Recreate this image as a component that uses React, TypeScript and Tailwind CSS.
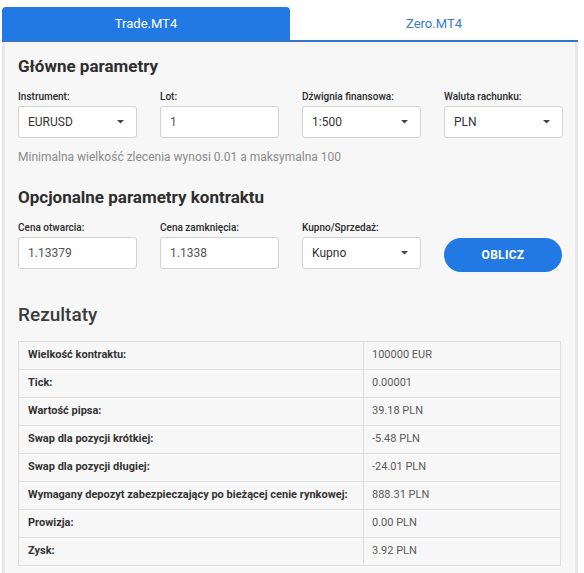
import React from 'react';

const BLUE = 'bg-[#2279e4]';

function Caret() {
    return (
        <svg width="7" height="4" viewBox="0 0 7 4" className="shrink-0">
            <path d="M0 0 L7 0 L3.5 3.5 Z" fill="#444" />
        </svg>
    );
}

function Field({ label, value, select }: { label: string; value: string; select?: boolean }) {
    return (
        <div className="flex flex-col">
            <label className="text-[10px] leading-[12px] font-medium text-[#2a2a2a]">{label}</label>
            <div className="mt-[3px] h-[32px] bg-white border border-[#d2d2d2] rounded-[3px] flex items-center justify-between pl-[9px] pr-[12px]">
                <span className={`text-[12px] ${select ? 'text-[#333]' : 'text-[#555]'}`}>{value}</span>
                {select && <Caret />}
            </div>
        </div>
    );
}

const results = [
    { label: 'Wielkość kontraktu:', value: '100000 EUR' },
    { label: 'Tick:', value: '0.00001' },
    { label: 'Wartość pipsa:', value: '39.18 PLN' },
    { label: 'Swap dla pozycji krótkiej:', value: '-5.48 PLN' },
    { label: 'Swap dla pozycji długiej:', value: '-24.01 PLN' },
    { label: 'Wymagany depozyt zabezpieczający po bieżącej cenie rynkowej:', value: '888.31 PLN' },
    { label: 'Prowizja:', value: '0.00 PLN' },
    { label: 'Zysk:', value: '3.92 PLN' },
];

export default function App() {
    return (
        <div className="w-[584px] h-[573px] overflow-hidden bg-white" style={{ fontFamily: 'Roboto, "Liberation Sans", sans-serif' }}>
            <div className="ml-[2px] w-[576px] pt-[7px]">
                {/* Tabs */}
                <div className="flex h-[33px]">
                    <div className={`w-[288px] ${BLUE} rounded-t-[4px] flex items-center justify-center text-[13px] text-white`}>
                        Trade.MT4
                    </div>
                    <div className="flex-1 flex items-center justify-center text-[13px] text-[#3a7bd0]">
                        Zero.MT4
                    </div>
                </div>
                <div className="h-[2px] bg-[#3276cc]" />

                {/* Panel */}
                <div className="bg-[#f7f7f7] border-x-[3px] border-[#e8e8e8] px-[13px] pt-[12px] pb-[20px]">
                    <h2 className="text-[17px] leading-[24px] font-bold text-[#2e2e2e]">Główne parametry</h2>
                    <div className="mt-[13px] grid grid-cols-4 gap-x-[23px] w-[545px]">
                        <Field label="Instrument:" value="EURUSD" select />
                        <Field label="Lot:" value="1" />
                        <Field label="Dźwignia finansowa:" value="1:500" select />
                        <Field label="Waluta rachunku:" value="PLN" select />
                    </div>
                    <p className="mt-[11px] text-[12px] leading-[16px] text-[#8a8a8a]">
                        Minimalna wielkość zlecenia wynosi 0.01 a maksymalna 100
                    </p>

                    <h2 className="mt-[20px] text-[17px] leading-[24px] font-bold text-[#2e2e2e]">Opcjonalne parametry kontraktu</h2>
                    <div className="mt-[13px] grid grid-cols-4 gap-x-[23px] w-[545px]">
                        <Field label="Cena otwarcia:" value="1.13379" />
                        <Field label="Cena zamknięcia:" value="1.1338" />
                        <Field label="Kupno/Sprzedaż:" value="Kupno" select />
                        <div className="flex items-end">
                            <button className={`w-[118px] h-[34px] -mb-[3px] ${BLUE} rounded-full text-white text-[12px] font-bold tracking-[0.3px]`}>
                                OBLICZ
                            </button>
                        </div>
                    </div>

                    <h2 className="mt-[33px] text-[19px] leading-[26px] font-medium text-[#3c3c3c]">Rezultaty</h2>
                    <table className="mt-[13px] w-[543px] border-collapse border border-[#dcdcdc] text-[11px]">
                        <tbody>
                            {results.map(r => (
                                <tr key={r.label} className="h-[28px] border-b border-[#e0e0e0]">
                                    <td className="w-[345px] pl-[9px] font-bold text-[#333] border-r border-[#e0e0e0]">{r.label}</td>
                                    <td className="pl-[8px] text-[#5a5a5a]">{r.value}</td>
                                </tr>
                            ))}
                        </tbody>
                    </table>
                </div>
            </div>
        </div>
    );
}
